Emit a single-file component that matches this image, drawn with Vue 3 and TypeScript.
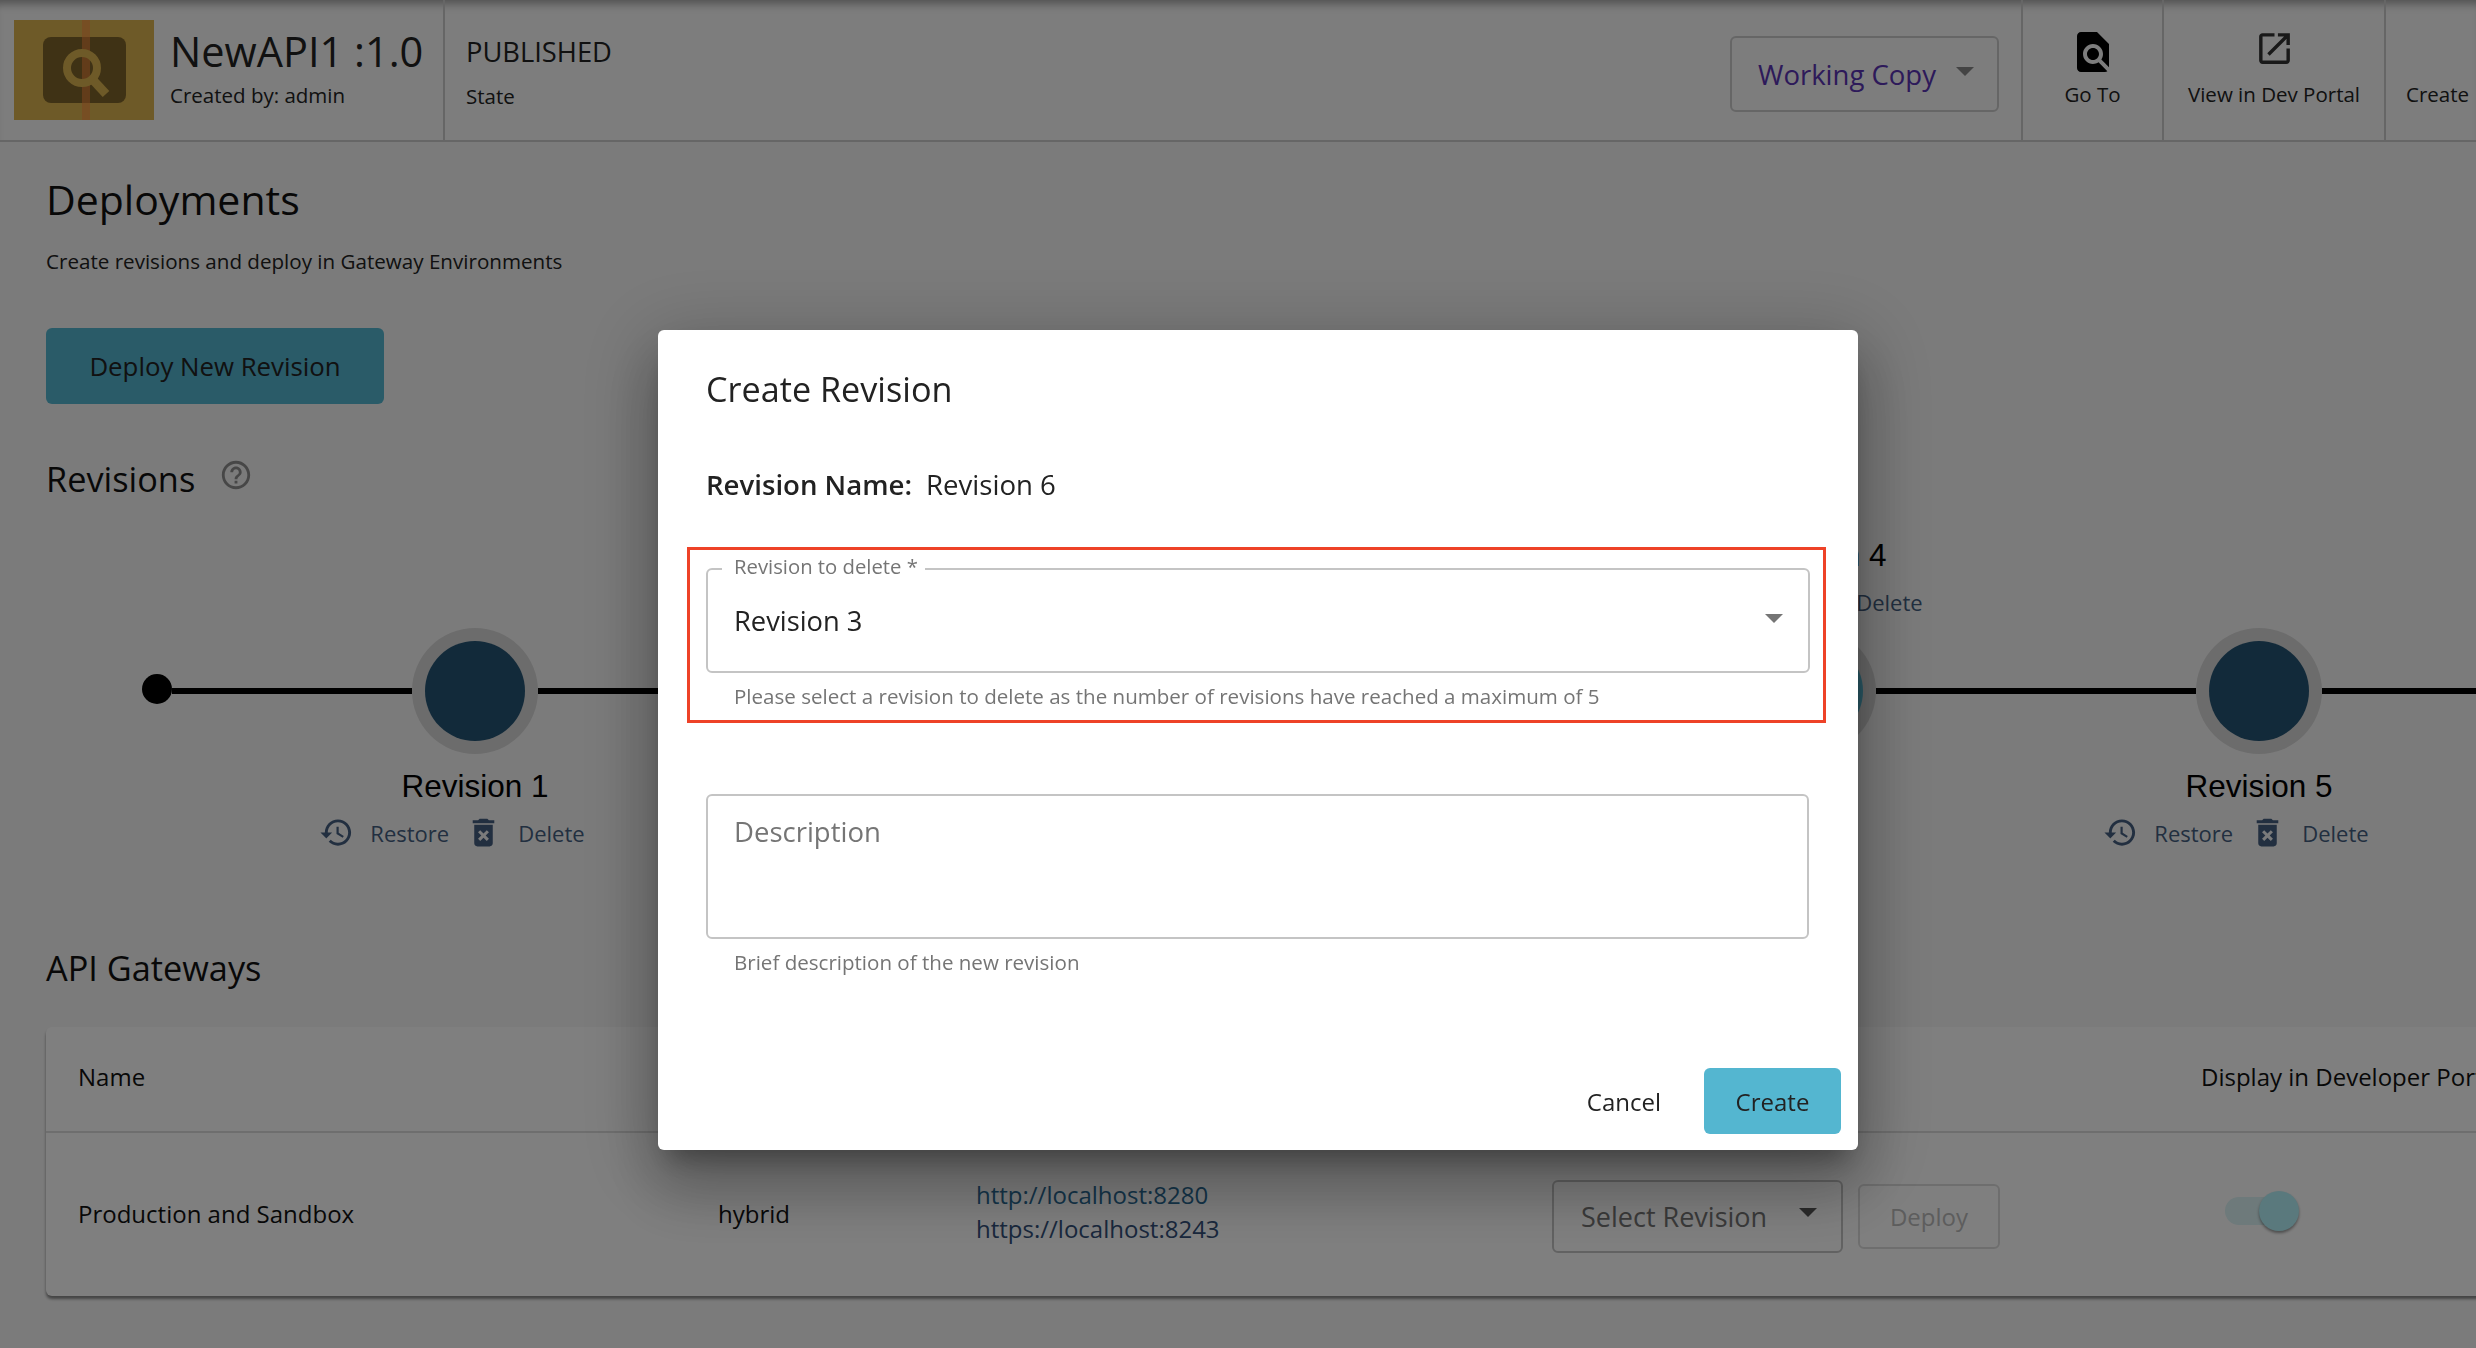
<script setup lang="ts">
import { ref } from 'vue';

interface Revision {
    name: string;
    above: boolean;
    deployed: boolean;
    covered?: boolean;
}

// revisions 2 and 3 sit behind the dialog, only their nodes are kept
const revisions = ref<Revision[]>([
    { name: 'Revision 1', above: false, deployed: false },
    { name: 'Revision 2', above: true, deployed: false, covered: true },
    { name: 'Revision 3', above: false, deployed: false, covered: true },
    { name: 'Revision 4', above: true, deployed: true },
    { name: 'Revision 5', above: false, deployed: false },
]);

const historyIcon = 'M13 3c-4.97 0-9 4.03-9 9H1l3.89 3.89.07.14L9 12H6c0-3.87 3.13-7 7-7s7 3.13 7 7-3.13 7-7 7c-1.93 0-3.68-.79-4.94-2.06l-1.42 1.42C8.27 19.99 10.51 21 13 21c4.97 0 9-4.03 9-9s-4.03-9-9-9zm-1 5v5l4.28 2.54.72-1.21-3.5-2.08V8H12z';
const deleteIcon = 'M6 19c0 1.1.9 2 2 2h8c1.1 0 2-.9 2-2V7H6v12zm2.46-7.12l1.41-1.41L12 12.59l2.12-2.12 1.41 1.41L13.41 14l2.12 2.12-1.41 1.41L12 15.41l-2.12 2.12-1.41-1.41L10.59 14l-2.13-2.12zM15.5 4l-1-1h-5l-1 1H5v2h14V4h-3.5z';
</script>

<template>
    <div class="page">
        <header class="topbar">
            <div class="logo">
                <svg width="140" height="100" viewBox="0 0 140 100">
                    <rect width="140" height="100" fill="#dcb450" />
                    <rect x="29" y="17" width="83" height="66" rx="8" fill="#7e642a" />
                    <rect x="68" width="8" height="100" fill="#ff8a3e" opacity="0.55" />
                    <circle cx="68" cy="48" r="15" fill="none" stroke="#dcb450" stroke-width="8" />
                    <path d="M79 60 L92 74" stroke="#dcb450" stroke-width="9" />
                </svg>
            </div>
            <div class="api-name">
                <div class="api-title">NewAPI1 :1.0</div>
                <div class="small">Created by: admin</div>
            </div>
            <div class="api-state">
                <div class="state-value">PUBLISHED</div>
                <div class="small">State</div>
            </div>
            <div class="spacer"></div>
            <div class="working-copy">
                <span>Working Copy</span>
                <i class="caret caret-top"></i>
            </div>
            <div class="top-action goto">
                <svg class="goto-icon" width="48" height="48" viewBox="0 0 24 24"><path d="M20 19.59V8l-6-6H6c-1.1 0-1.99.9-1.99 2L4 20c0 1.1.89 2 1.99 2H18c.45 0 .85-.15 1.19-.4l-4.43-4.43c-.8.52-1.74.83-2.76.83-2.76 0-5-2.24-5-5s2.24-5 5-5 5 2.24 5 5c0 1.02-.31 1.96-.83 2.75L20 19.59zM9 13c0 1.66 1.34 3 3 3s3-1.34 3-3-1.34-3-3-3-3 1.34-3 3z" /></svg>
                <span>Go To</span>
            </div>
            <div class="top-action devportal">
                <svg class="portal-icon" width="41" height="41" viewBox="0 0 24 24"><path d="M19 19H5V5h7V3H5c-1.11 0-2 .9-2 2v14c0 1.1.89 2 2 2h14c1.1 0 2-.9 2-2v-7h-2v7zM14 3v2h3.59l-9.83 9.83 1.41 1.41L19 6.41V10h2V3h-7z" /></svg>
                <span>View in Dev Portal</span>
            </div>
            <div class="top-action create-top">
                <span>Create</span>
            </div>
        </header>

        <main class="content">
            <h1 class="heading">Deployments</h1>
            <p class="subtitle">Create revisions and deploy in Gateway Environments</p>
            <div class="deploy-new">Deploy New Revision</div>

            <div class="revisions-title">
                <h2 class="section">Revisions</h2>
                <svg class="help" width="34" height="34" viewBox="0 0 24 24"><path d="M11 18h2v-2h-2v2zm1-16C6.48 2 2 6.48 2 12s4.48 10 10 10 10-4.48 10-10S17.52 2 12 2zm0 18c-4.41 0-8-3.59-8-8s3.59-8 8-8 8 3.59 8 8-3.59 8-8 8zm0-14c-2.21 0-4 1.79-4 4h2c0-1.1.9-2 2-2s2 .9 2 2c0 2-3 1.75-3 5h2c0-2.25 3-2.5 3-5 0-2.21-1.79-4-4-4z" /></svg>
            </div>

            <div class="timeline">
                <div class="lead">
                    <div class="dot"></div>
                    <div class="line"></div>
                </div>
                <div v-for="rev in revisions" :key="rev.name" class="rev">
                    <div class="rev-top">
                        <template v-if="rev.above && !rev.covered">
                            <div class="rev-label">{{ rev.name }}</div>
                            <div class="rev-actions">
                                <svg width="35" height="35" viewBox="0 0 24 24"><path :d="historyIcon" /></svg>
                                <span>Restore</span>
                                <svg width="37" height="37" viewBox="0 0 24 24"><path :d="deleteIcon" /></svg>
                                <span>Delete</span>
                            </div>
                        </template>
                    </div>
                    <div class="rev-track">
                        <div class="line"></div>
                        <div class="halo"><div class="node" :class="{ deployed: rev.deployed }"></div></div>
                        <div class="line"></div>
                    </div>
                    <div class="rev-bottom">
                        <template v-if="!rev.above && !rev.covered">
                            <div class="rev-label">{{ rev.name }}</div>
                            <div class="rev-actions">
                                <svg width="35" height="35" viewBox="0 0 24 24"><path :d="historyIcon" /></svg>
                                <span>Restore</span>
                                <svg width="37" height="37" viewBox="0 0 24 24"><path :d="deleteIcon" /></svg>
                                <span>Delete</span>
                            </div>
                        </template>
                    </div>
                </div>
            </div>

            <h2 class="section gateways">API Gateways</h2>
            <div class="table">
                <div class="row head">
                    <div>Name</div>
                    <div></div>
                    <div></div>
                    <div></div>
                    <div>Display in Developer Portal</div>
                </div>
                <div class="row body">
                    <div>Production and Sandbox</div>
                    <div>hybrid</div>
                    <div class="urls">
                        <span class="url-a">http://localhost:8280</span>
                        <span class="url-b">https://localhost:8243</span>
                    </div>
                    <div class="deploy-cell">
                        <div class="select-revision">
                            <span>Select Revision</span>
                            <i class="caret caret-row"></i>
                        </div>
                        <div class="deploy-btn">Deploy</div>
                    </div>
                    <div class="toggle-cell">
                        <div class="toggle"><div class="thumb"></div></div>
                    </div>
                </div>
            </div>
        </main>

        <div class="overlay">
            <div class="modal">
                <div class="modal-title">Create Revision</div>
                <div class="name-row">
                    <b>Revision Name:</b>
                    <span>Revision 6</span>
                </div>
                <div class="highlight">
                    <div class="field select-field">
                        <label class="float-label">Revision to delete *</label>
                        <span>Revision 3</span>
                        <i class="caret caret-modal"></i>
                    </div>
                    <div class="helper">Please select a revision to delete as the number of revisions have reached a maximum of 5</div>
                </div>
                <div class="field desc-field">Description</div>
                <div class="helper">Brief description of the new revision</div>
                <div class="modal-actions">
                    <span class="cancel">Cancel</span>
                    <span class="create">Create</span>
                </div>
            </div>
        </div>
    </div>
</template>

<style>
html, body {
    margin: 0;
    overflow: hidden;
}
</style>

<style scoped>
.page {
    position: relative;
    width: 2476px;
    height: 1348px;
    overflow: hidden;
    background: #f7f7f7;
    color: #222;
    font-family: "Open Sans", "Noto Sans", sans-serif;
}

.topbar {
    display: flex;
    height: 140px;
    background: #fafafa;
    border-bottom: 2px solid #ccc;
    box-shadow: inset 0 10px 8px -6px rgba(0, 0, 0, 0.35);
}

.logo {
    margin: 20px 16px 0 14px;
    height: 100px;
}

.api-name {
    width: 273px;
    border-right: 2px solid #ccc;
    padding-top: 22px;
}

.api-title {
    font-size: 41.5px;
    line-height: 58px;
}

.small {
    font-size: 20.5px;
    line-height: 30px;
}

.api-state {
    padding: 33px 0 0 21px;
}

.state-value {
    font-size: 27.3px;
    line-height: 38px;
    margin-bottom: 10px;
}

.spacer {
    flex: 1;
}

.working-copy {
    display: flex;
    align-items: center;
    width: 269px;
    height: 76px;
    box-sizing: border-box;
    margin: 36px 22px 0 0;
    padding-left: 26px;
    border: 2px solid #ccc;
    border-radius: 6px;
    color: #5a34b4;
    font-size: 27.5px;
}

.caret {
    display: block;
    width: 0;
    height: 0;
    border-left: 9px solid transparent;
    border-right: 9px solid transparent;
    border-top: 9px solid #757575;
}

.caret-top {
    margin: -6px 0 0 20px;
    border-top-color: #888;
}

.top-action {
    display: flex;
    flex-direction: column;
    align-items: center;
    box-sizing: border-box;
    border-left: 2px solid #ccc;
    font-size: 20.5px;
}

.goto {
    width: 141px;
}

.goto-icon {
    margin-top: 28px;
    margin-bottom: 4px;
}

.goto-icon path {
    fill: #000;
}

.devportal {
    width: 222px;
}

.portal-icon {
    margin-top: 28px;
    margin-bottom: 11px;
}

.portal-icon path {
    fill: #333;
}

.create-top {
    width: 92px;
    padding-top: 80px;
    padding-left: 20px;
    align-items: flex-start;
}

.content {
    padding-left: 46px;
}

.heading {
    margin: 29px 0 0;
    font-size: 41px;
    font-weight: 400;
    color: #111;
}

.subtitle {
    margin: 19px 0 0;
    font-size: 20.6px;
    line-height: 30px;
}

.deploy-new {
    display: flex;
    align-items: center;
    justify-content: center;
    width: 338px;
    height: 76px;
    margin-top: 52px;
    border-radius: 6px;
    background: #54b6d0;
    font-size: 25.8px;
}

.revisions-title {
    display: flex;
    margin-top: 51px;
}

.section {
    margin: 0;
    font-size: 34.3px;
    font-weight: 400;
    color: #111;
}

.help {
    margin: 3px 0 0 24px;
}

.help path {
    fill: #8f8f8f;
}

.timeline {
    display: flex;
    margin-top: 28px;
    margin-left: 1px;
}

.lead {
    display: flex;
    flex-shrink: 0;
    align-items: center;
    height: 126px;
    width: 110px;
    margin-top: 98px;
    margin-left: 95px;
}

.dot {
    flex-shrink: 0;
    width: 30px;
    height: 30px;
    margin-top: -4px;
    border-radius: 50%;
    background: #000;
}

.line {
    flex: 1;
    height: 6px;
    background: #000;
}

.rev {
    flex-shrink: 0;
    display: flex;
    flex-direction: column;
    align-items: center;
    width: 446px;
}

.rev-top {
    display: flex;
    flex-direction: column;
    align-items: center;
    justify-content: flex-end;
    height: 98px;
    padding-bottom: 8px;
    box-sizing: border-box;
}

.rev-track {
    display: flex;
    align-items: center;
    align-self: stretch;
    height: 126px;
}

.halo {
    display: flex;
    align-items: center;
    justify-content: center;
    width: 126px;
    height: 126px;
    border-radius: 50%;
    background: #d8d8d8;
}

.node {
    width: 100px;
    height: 100px;
    border-radius: 50%;
    background: #245474;
}

.node.deployed {
    background: #54b6d0;
}

.rev-bottom {
    display: flex;
    flex-direction: column;
    align-items: center;
    height: 100px;
    padding-top: 15px;
    box-sizing: border-box;
}

.rev-label {
    font-family: "Liberation Sans", Arial, sans-serif;
    font-size: 31.5px;
    line-height: 35px;
    color: #000;
}

.rev-actions {
    display: flex;
    align-items: center;
    gap: 16px;
    height: 37px;
    margin-top: 10px;
    margin-right: 46px;
    font-size: 22px;
    color: #445e80;
    white-space: nowrap;
}

.rev-actions svg {
    fill: #445e80;
}

.gateways {
    margin-top: 90px;
}

.table {
    width: 2500px;
    height: 269px;
    margin-top: 36px;
    border-radius: 6px;
    background: #fff;
    box-shadow: 0 3px 3px rgba(0, 0, 0, 0.45);
}

.row {
    display: grid;
    grid-template-columns: 640px 258px 576px 649px 1fr;
    padding-left: 32px;
    align-items: center;
    font-size: 24px;
    color: #111;
}

.head {
    height: 104px;
    box-sizing: content-box;
    border-bottom: 2px solid #ddd;
    white-space: nowrap;
}

.head > div {
    margin-top: -6px;
}

.body {
    height: 160px;
}

.urls {
    display: flex;
    flex-direction: column;
    gap: 1px;
    margin-top: -3px;
}

.urls span {
    line-height: 33px;
}

.url-a {
    color: #2a6a94;
}

.url-b {
    color: #33507a;
}

.deploy-cell {
    display: flex;
    align-items: center;
    gap: 15px;
    margin-top: 7px;
}

.select-revision {
    display: flex;
    align-items: center;
    box-sizing: border-box;
    width: 291px;
    height: 73px;
    padding-left: 27px;
    border: 2px solid #c4c4c4;
    border-radius: 6px;
    color: #757575;
    font-size: 27px;
}

.caret-row {
    margin: -8px 0 0 32px;
    border-top-color: #555;
}

.deploy-btn {
    display: flex;
    align-items: center;
    justify-content: center;
    box-sizing: border-box;
    width: 142px;
    height: 65px;
    border: 2px solid #ddd;
    border-radius: 6px;
    color: #bbb;
    font-size: 24px;
}

.toggle-cell {
    padding-left: 24px;
    margin-top: -4px;
}

.toggle {
    position: relative;
    width: 60px;
    height: 28px;
    border-radius: 14px;
    background: #dcf4f6;
}

.thumb {
    position: absolute;
    top: -6px;
    right: -14px;
    width: 40px;
    height: 40px;
    border-radius: 50%;
    background: #b4f2fa;
    box-shadow: 0 2px 3px rgba(0, 0, 0, 0.4);
}

.overlay {
    position: fixed;
    inset: 0;
    background: rgba(0, 0, 0, 0.5);
}

.modal {
    position: absolute;
    left: 658px;
    top: 330px;
    box-sizing: border-box;
    width: 1200px;
    height: 820px;
    padding: 35px 49px 0 48px;
    border-radius: 6px;
    background: #fff;
    color: #222;
    box-shadow: 0 18px 24px -11px rgba(0, 0, 0, 0.3), 0 38px 60px 5px rgba(0, 0, 0, 0.2), 0 14px 74px 13px rgba(0, 0, 0, 0.18);
}

.modal-title {
    font-size: 34.2px;
}

.name-row {
    display: flex;
    gap: 14px;
    margin-top: 53px;
    font-size: 27.6px;
}

.name-row b {
    font-weight: 600;
}

.highlight {
    width: 1139px;
    height: 176px;
    box-sizing: border-box;
    margin: 44px 0 0 -19px;
    padding: 18px 13px 0 16px;
    border: 3px solid #ee4228;
}

.field {
    box-sizing: border-box;
    border: 2px solid #c4c4c4;
    border-radius: 6px;
    padding-left: 26px;
}

.select-field {
    position: relative;
    display: flex;
    align-items: center;
    height: 105px;
    font-size: 27.3px;
}

.float-label {
    position: absolute;
    top: -17px;
    left: 14px;
    padding: 0 7px 0 12px;
    background: #fff;
    color: #757575;
    font-size: 20.3px;
    line-height: 27px;
}

.caret-modal {
    position: absolute;
    right: 25px;
    top: 44px;
}

.helper {
    margin-top: 10px;
    padding-left: 28px;
    font-size: 20.55px;
    line-height: 27px;
    color: #757575;
}

.desc-field {
    height: 145px;
    margin-top: 71px;
    padding-top: 17px;
    font-size: 27.5px;
    color: #757575;
}

.modal-actions {
    display: flex;
    align-items: center;
    justify-content: flex-end;
    gap: 43px;
    margin: 92px -32px 0 0;
    font-size: 24px;
}

.create {
    display: flex;
    align-items: center;
    justify-content: center;
    width: 137px;
    height: 66px;
    border-radius: 6px;
    background: #54b6d0;
}
</style>
